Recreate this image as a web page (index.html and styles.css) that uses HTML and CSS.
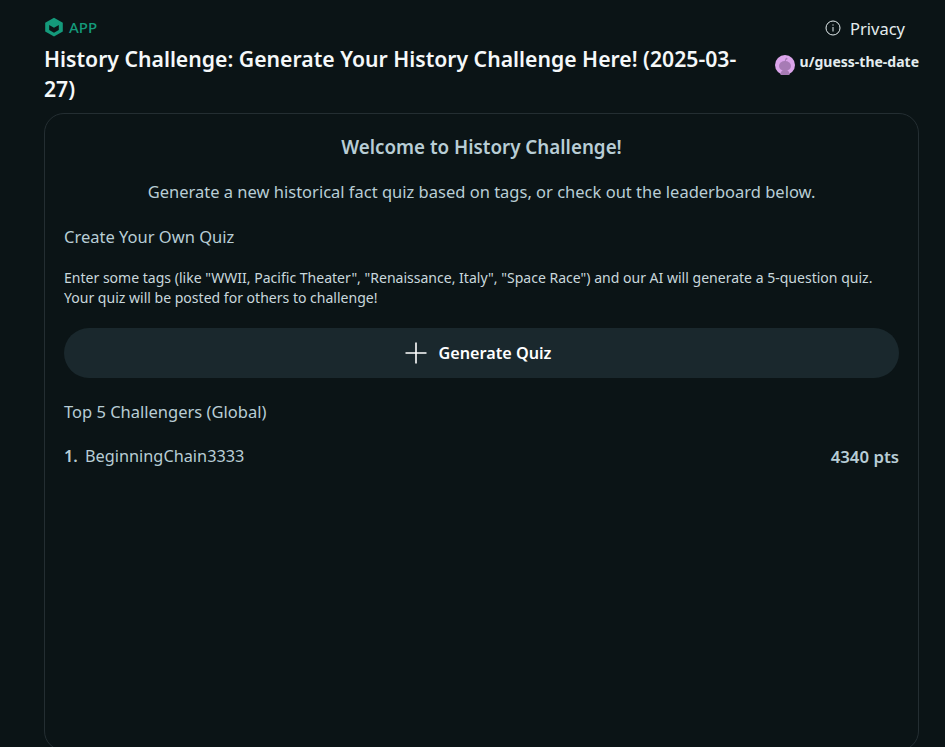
FILE: index.html
```html
<!DOCTYPE html>
<html lang="en">
<head>
  <meta charset="UTF-8" />
  <meta name="viewport" content="width=device-width, initial-scale=1.0" />
  <title>History Challenge</title>
  <link rel="stylesheet" href="styles.css">
</head>
<body>
  <header class="post-header">
    <div class="post-info">
      <div class="app-label">
        <svg class="app-icon" viewBox="0 0 20 20" width="20" height="20">
          <path fill="#149a7b" d="M10 .8l8.800 4.900v8.900L10 19.500l-8.800-4.900V5.700z"/>
          <path fill="#0b1416" d="M5.200 8l4.800 2.700L14.800 8v5L10 15.700 5.200 13z"/>
        </svg>
        <span>APP</span>
      </div>
      <h1>History Challenge: Generate Your History Challenge Here! (2025-03-27)</h1>
    </div>
    <div class="post-meta">
      <div class="privacy">
        <svg viewBox="0 0 16 16" width="16" height="16">
          <circle cx="8" cy="8" r="7" fill="none" stroke="#e4ecee" stroke-width="1"/>
          <path d="M8 7v4.500M8 4.400v1.200" stroke="#e4ecee" stroke-width="1" fill="none"/>
        </svg>
        <span>Privacy</span>
      </div>
      <div class="author">
        <svg class="avatar" viewBox="0 0 20 20" width="20" height="20">
          <circle cx="10" cy="10" r="10" fill="#dba4ea"/>
          <ellipse cx="10" cy="11" rx="6" ry="5" fill="#a77bb5"/>
          <path fill="#a77bb5" d="M5.500 20c0-3 1-5 4.500-5s4.500 2 4.500 5z"/>
          <path fill="none" stroke="#a77bb5" d="M10 7l.8-3"/>
          <circle cx="11.500" cy="3.800" r="1" fill="#a77bb5"/>
        </svg>
        <span>u/guess-the-date</span>
      </div>
    </div>
  </header>

  <main class="card">
    <h2>Welcome to History Challenge!</h2>
    <p class="intro">Generate a new historical fact quiz based on tags, or check out the leaderboard below.</p>
    <h3>Create Your Own Quiz</h3>
    <p class="help">Enter some tags (like "WWII, Pacific Theater", "Renaissance, Italy", "Space Race") and our AI will generate a 5-question quiz. Your quiz will be posted for others to challenge!</p>
    <button class="generate">
      <svg viewBox="0 0 24 24" width="24" height="24">
        <path d="M12 1.500v21M1.500 12h21" stroke="#fff" stroke-width="1.600" fill="none"/>
      </svg>
      <span>Generate Quiz</span>
    </button>
    <h3 class="board-title">Top 5 Challengers (Global)</h3>
    <ol class="board">
      <li>
        <span class="rank">1.</span>
        <span class="name">BeginningChain3333</span>
        <span class="pts">4340 pts</span>
      </li>
    </ol>
  </main>
</body>
</html>
```

FILE: styles.css
```css
html, body {
  height: 100%;
}

body {
  margin: 0;
  box-sizing: border-box;
  height: 747px;
  overflow: hidden;
  padding: 15px 26px 0 44px;
  font-family: 'Noto Sans', 'Open Sans', sans-serif;
  background: #0b1416;
  color: #b8cdd5;
  display: flex;
  flex-direction: column;
}

.post-header {
  display: flex;
  justify-content: space-between;
  gap: 36px;
}

.post-info {
  flex: 1;
}

.app-label {
  display: flex;
  align-items: center;
  gap: 5px;
  height: 23px;
  font-size: 15px;
  font-weight: 500;
  color: #149a7b;
}

h1 {
  margin: 6px 0 9px;
  font-size: 21.200px;
  line-height: 30px;
  font-weight: 600;
  color: #f5f8f9;
}

.post-meta {
  display: flex;
  flex-direction: column;
  align-items: flex-end;
  flex-shrink: 0;
}

.privacy {
  display: flex;
  align-items: center;
  gap: 9px;
  margin: 2px 14px 0 0;
  height: 22px;
  font-size: 16.500px;
  color: #e4ecee;
}

.author {
  display: flex;
  align-items: flex-start;
  gap: 5px;
  margin-top: 13px;
  font-size: 14px;
  line-height: 20px;
  font-weight: 700;
  color: #e4ecee;
}

.avatar {
  margin-top: 3px;
}

.card {
  flex: 1;
  margin-bottom: -4px;
  padding: 19px 19px 0;
  border: 1px solid #242e32;
  border-radius: 20px;
}

h2 {
  margin: 0 0 18px;
  font-size: 18.800px;
  line-height: 28px;
  font-weight: 600;
  text-align: center;
}

.intro {
  margin: 0 0 20px;
  font-size: 16.500px;
  line-height: 25px;
  text-align: center;
}

h3 {
  margin: 0;
  font-size: 16.500px;
  line-height: 25px;
  font-weight: 400;
}

.help {
  margin: 19px 0 20px;
  font-size: 14.040px;
  line-height: 20px;
  color: #c9d8dd;
}

.generate {
  display: flex;
  justify-content: center;
  align-items: center;
  gap: 11px;
  width: 100%;
  height: 50px;
  padding: 0 8px 0 0;
  border: none;
  border-radius: 25px;
  background: #1a282d;
  color: #fff;
  font-family: inherit;
  font-size: 16.200px;
  font-weight: 600;
}

.board-title {
  margin-top: 21px;
}

.board {
  list-style: none;
  margin: 20px 0 0;
  padding: 0;
}

.board li {
  display: flex;
  align-items: center;
  font-size: 16.300px;
  line-height: 25px;
}

.rank {
  width: 21px;
  font-weight: 600;
}

.name {
  flex: 1;
}

.pts {
  font-size: 16.800px;
  font-weight: 600;
}
```
